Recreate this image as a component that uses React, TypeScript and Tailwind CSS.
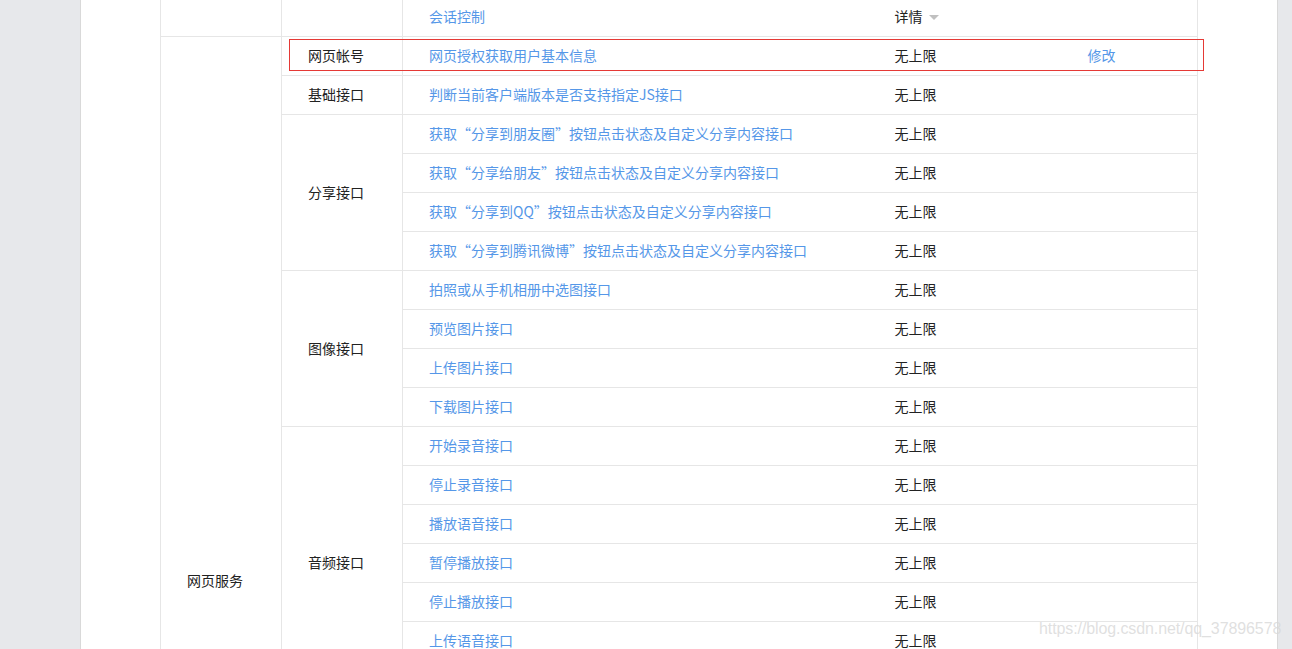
import React from 'react';

interface Group {
  name: string;
  items: string[];
  action?: string;
}

const groups: Group[] = [
  { name: '网页帐号', items: ['网页授权获取用户基本信息'], action: '修改' },
  { name: '基础接口', items: ['判断当前客户端版本是否支持指定JS接口'] },
  {
    name: '分享接口',
    items: [
      '获取“分享到朋友圈”按钮点击状态及自定义分享内容接口',
      '获取“分享给朋友”按钮点击状态及自定义分享内容接口',
      '获取“分享到QQ”按钮点击状态及自定义分享内容接口',
      '获取“分享到腾讯微博”按钮点击状态及自定义分享内容接口',
    ],
  },
  { name: '图像接口', items: ['拍照或从手机相册中选图接口', '预览图片接口', '上传图片接口', '下载图片接口'] },
  {
    name: '音频接口',
    items: ['开始录音接口', '停止录音接口', '播放语音接口', '暂停播放接口', '停止播放接口', '上传语音接口', '下载语音接口'],
  },
  { name: '智能接口', items: ['识别音频并返回识别结果接口'] },
  { name: '设备信息', items: ['获取网络状态接口'] },
  { name: '地理位置', items: ['使用微信内置地图查看位置接口', '获取地理位置接口'] },
  {
    name: '界面操作',
    items: [
      '隐藏右上角菜单接口',
      '显示右上角菜单接口',
      '关闭当前网页窗口接口',
      '批量隐藏功能按钮接口',
      '批量显示功能按钮接口',
      '隐藏所有非基础按钮接口',
      '显示所有功能按钮接口',
    ],
  },
];

const total = groups.reduce((n, g) => n + g.items.length, 0);

const vLine = 'border-l border-r border-[#d6d6d6]';
const hLine = 'border-b border-[#e6e6e6]';

export default function App() {
  return (
    <div
      className="relative flex h-[649px] overflow-hidden bg-[#e7e8eb] text-[14px] text-[#222]"
      style={{ fontFamily: '"Noto Sans CJK SC", "Liberation Sans", sans-serif' }}
    >
      <div className="w-[80px] shrink-0" />
      <div className="relative w-[1198px] shrink-0 border-l border-r border-[#d9d9d9] bg-white pl-[79px]">
        <table className="-mt-[3px] w-[1038px] table-fixed border-collapse">
          <colgroup>
            <col className="w-[121px]" />
            <col className="w-[121px]" />
            <col className="w-[466px]" />
            <col className="w-[193px]" />
            <col />
          </colgroup>
          <tbody>
            <tr className="h-[39px]">
              <td className={`${vLine} ${hLine}`} />
              <td className={`${vLine} ${hLine}`} />
              <td className={`${hLine} border-l border-[#d6d6d6] pl-[26px] text-[#5597e8]`}>会话控制</td>
              <td className={`${hLine} pl-[26px]`}>
                <span className="inline-flex items-center gap-[6px]">
                  详情
                  <span className="mt-[2px] h-0 w-0 border-l-[5px] border-r-[5px] border-t-[5px] border-l-transparent border-r-transparent border-t-[#c0c0c0]" />
                </span>
              </td>
              <td className={`${hLine} border-r border-[#d6d6d6]`} />
            </tr>
            {groups.map((g, gi) =>
              g.items.map((item, ii) => (
                <tr key={`${gi}-${ii}`} className="h-[39px]">
                  {gi === 0 && ii === 0 && (
                    <td rowSpan={total} className={`${vLine} ${hLine} pb-[4px] pl-[26px] align-middle`}>
                      网页服务
                    </td>
                  )}
                  {ii === 0 && (
                    <td rowSpan={g.items.length} className={`${vLine} ${hLine} pl-[26px] align-middle`}>
                      {g.name}
                    </td>
                  )}
                  <td className={`${hLine} border-l border-[#d6d6d6] pl-[26px] text-[#5597e8]`}>{item}</td>
                  <td className={`${hLine} pl-[26px]`}>无上限</td>
                  <td className={`${hLine} border-r border-[#d6d6d6] pl-[26px] text-[#5597e8]`}>
                    {g.action ?? ''}
                  </td>
                </tr>
              ))
            )}
          </tbody>
        </table>
        <div className="pointer-events-none absolute left-[208px] top-[39px] h-[32px] w-[915px] border border-[#e53935]" />
      </div>
      <div className="flex-1" />
      <div
        className="pointer-events-none absolute bottom-[8px] left-[1039px] text-[16px] tracking-[-0.1px] text-[#d8d8d8]/80"
        style={{ fontFamily: '"Liberation Sans", Arial, sans-serif' }}
      >
        https://blog.csdn.net/qq_37896578
      </div>
    </div>
  );
}
